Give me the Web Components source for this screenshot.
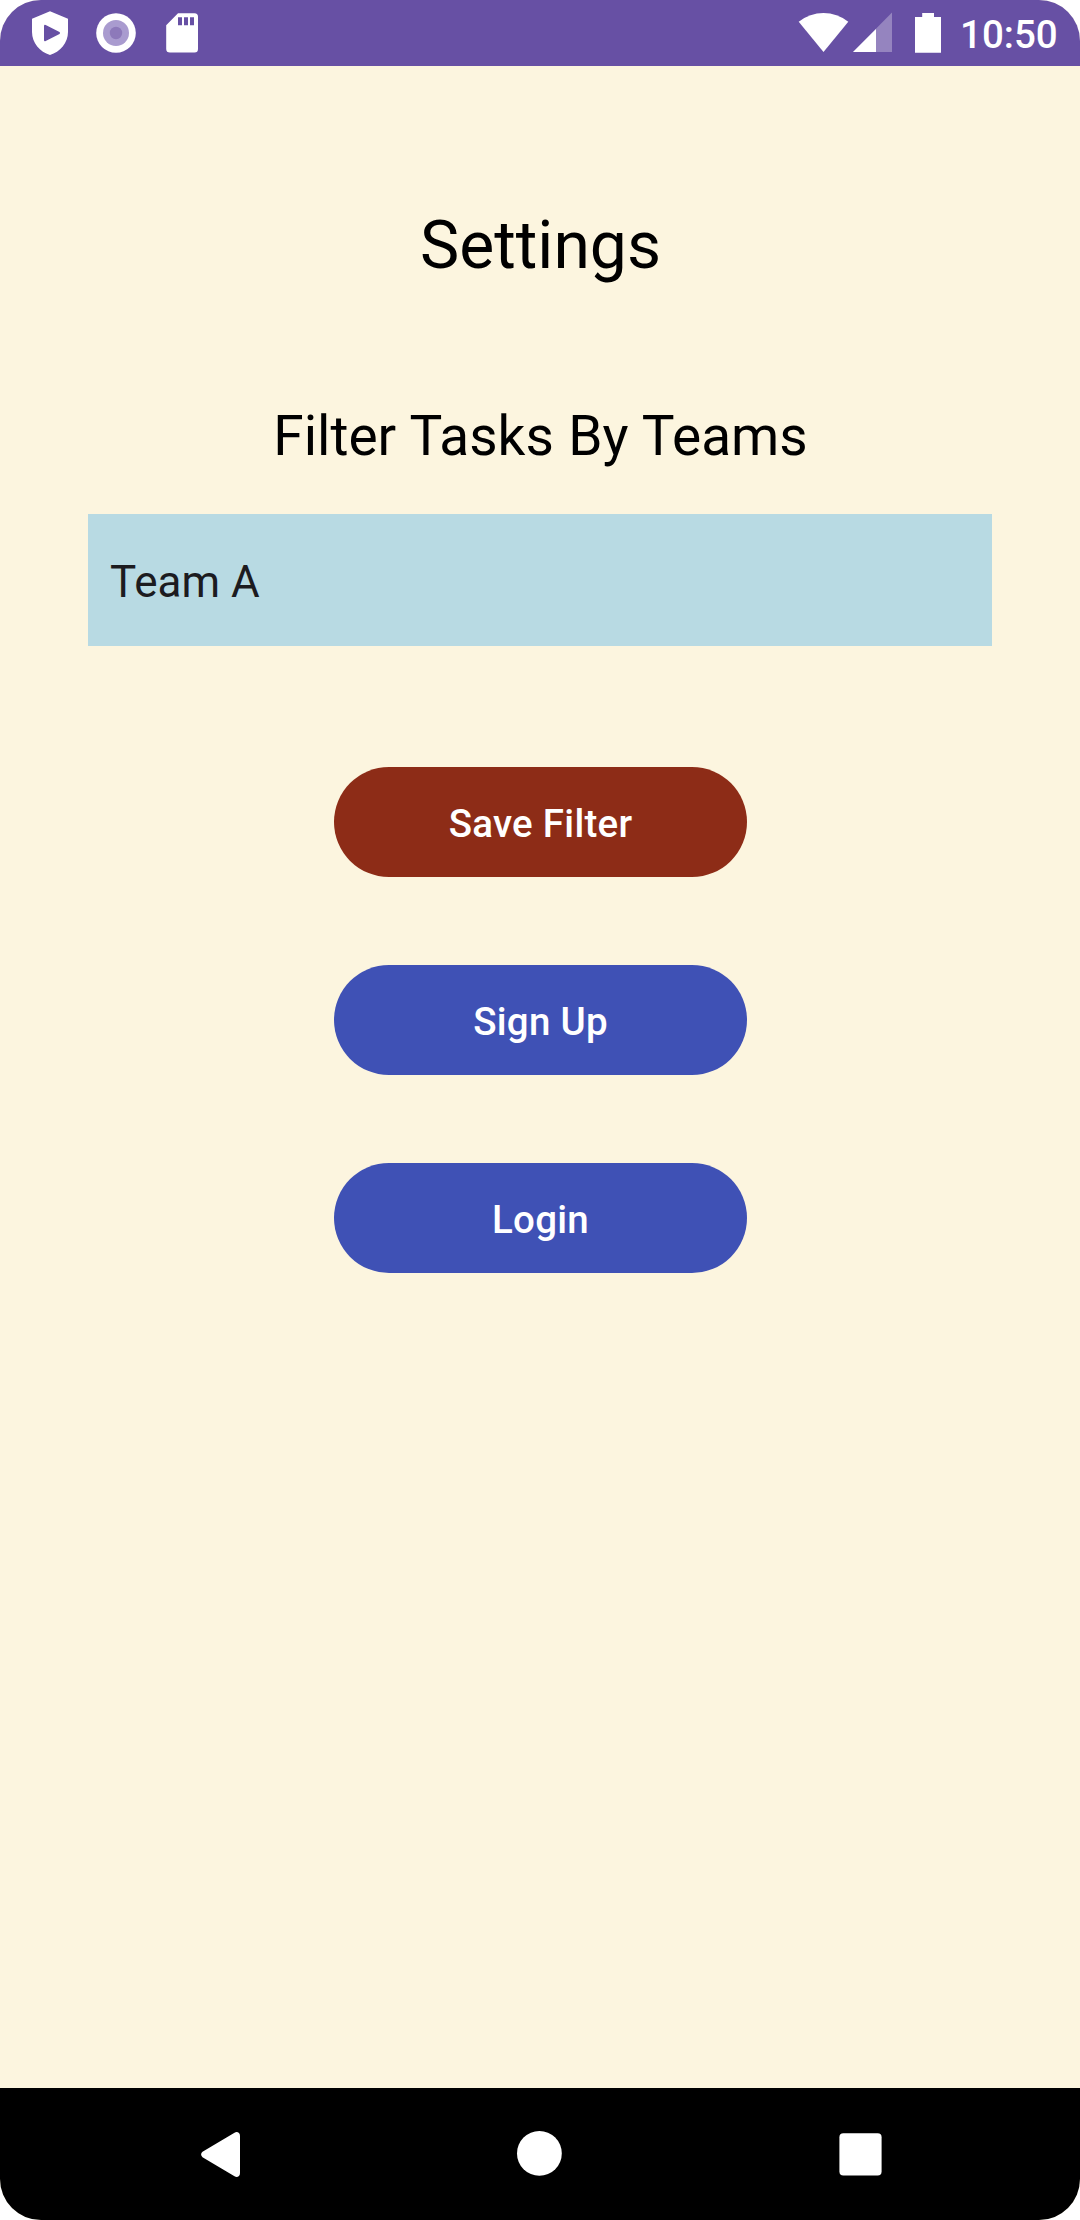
<!DOCTYPE html>
<html lang="en">
<head>
<meta charset="utf-8">
<title>Settings</title>
<style>
html,body{margin:0;padding:0;background:#fff}
body{font-family:Roboto,sans-serif}
</style>
</head>
<body>
<settings-screen></settings-screen>
<script>
function define(name, html) {
  const template = document.createElement('template');
  template.innerHTML = html;
  customElements.define(name, class extends HTMLElement {
    constructor() {
      super();
      this.attachShadow({ mode: 'open' }).append(template.content.cloneNode(true));
    }
  });
}

define('status-bar', `
<style>
:host{display:flex;justify-content:space-between;height:66px;background:#6750a4;color:#fff}
div{display:flex}
svg{display:block;flex:none}
.clock{box-sizing:border-box;width:138px;font-size:38.5px;font-weight:500;line-height:45px;padding:12px 0 0 18px;white-space:nowrap}
</style>
<div>
<svg width="220" height="66" viewBox="0 0 220 66" fill="#fff">
<path fill-rule="evenodd" d="M50 11.3 68 18.7V32C68 43 60 52 50 55C40 52 32 43 32 32V18.700ZM44 26.200V40Q44 41.800 45.700 41L59.500 33.900Q60.700 33 59.500 32.100L45.700 25Q44 24.300 44 26.200Z"/>
<circle cx="116" cy="33" r="19.800"/><circle cx="116" cy="33" r="13" fill="#a99bcf"/><circle cx="116" cy="33" r="6.200" fill="#8d79ba"/>
<path fill-rule="evenodd" d="M178 13.200H194.500Q198 13.200 198 16.700V49Q198 52.600 194.500 52.600H170Q166.200 52.600 166.200 49V25.200ZM178 17.200V25.200H182V17.200ZM184 17.200V25.200H188V17.200ZM190 17.200V25.200H194V17.200Z"/>
</svg>
</div>
<div>
<svg width="150" height="66" viewBox="792 0 150 66" fill="#fff">
<path d="M798.700 21.700Q810 13 823.500 13Q837 13 848.300 21.700L823.500 52Z"/>
<path d="M892 12.600V52H853Z" fill-opacity=".3"/><path d="M876 29V52H853Z"/>
<path d="M922.200 13H934V17H941V52.700H915V17H922.200Z"/>
</svg>
<span class="clock">10:50</span>
</div>`);

define('team-select', `
<style>
:host{display:flex;align-items:center;box-sizing:border-box;height:132px;padding:4px 22px 0;background:#b8dae3;color:#1c1b1f;font-size:44px;line-height:52px}
</style><span><slot></slot></span>`);

define('pill-button', `
<style>
:host{display:flex;width:413px;height:110px}
button{flex:1;border:0;border-radius:55px;padding:3px 0 0;background:var(--fill,#3f51b5);color:#fff;font:500 38.500px/45px Roboto,sans-serif;letter-spacing:.275px}
</style><button><slot></slot></button>`);

define('nav-bar', `
<style>
:host{display:grid;grid-template-columns:440px 200px 440px;height:132px;background:#000}
svg{display:block}
</style>
<svg width="440" height="132" viewBox="0 2088 440 132" fill="#fff"><path d="M202.500 2151.800 234.500 2132.700Q237 2131.300 239 2133Q240 2134 240 2136V2173Q240 2175 239 2176Q237 2177.800 234.500 2176.300L202.500 2157.200Q199.700 2154.500 202.500 2151.800Z"/></svg>
<svg width="200" height="132" viewBox="440 2088 200 132" fill="#fff"><circle cx="539.400" cy="2153.400" r="22.400"/></svg>
<svg width="440" height="132" viewBox="640 2088 440 132" fill="#fff"><rect x="839.400" y="2133.300" width="42.200" height="42.300" rx="4"/></svg>`);

define('settings-screen', `
<style>
:host{display:flex;flex-direction:column;width:1080px;height:2220px;border-radius:41px;overflow:hidden;background:#fcf5df;color:#000}
main{flex:1;display:flex;flex-direction:column;align-items:center}
h1,h2{margin:0;font-weight:400;white-space:nowrap;padding-left:1px}
h1{margin-top:141px;font-size:66px;line-height:78px}
h2{margin-top:119px;font-size:55px;line-height:64px;word-spacing:.73px}
team-select{width:904px;margin-top:46px}
.actions{display:flex;flex-direction:column;gap:88px;margin-top:121px;padding-left:1px}
.save{--fill:#8d2c17}
</style>
<status-bar></status-bar>
<main>
<h1>Settings</h1>
<h2>Filter Tasks By Teams</h2>
<team-select>Team A</team-select>
<div class="actions">
<pill-button class="save">Save Filter</pill-button>
<pill-button>Sign Up</pill-button>
<pill-button>Login</pill-button>
</div>
</main>
<nav-bar></nav-bar>`);
</script>
</body>
</html>
